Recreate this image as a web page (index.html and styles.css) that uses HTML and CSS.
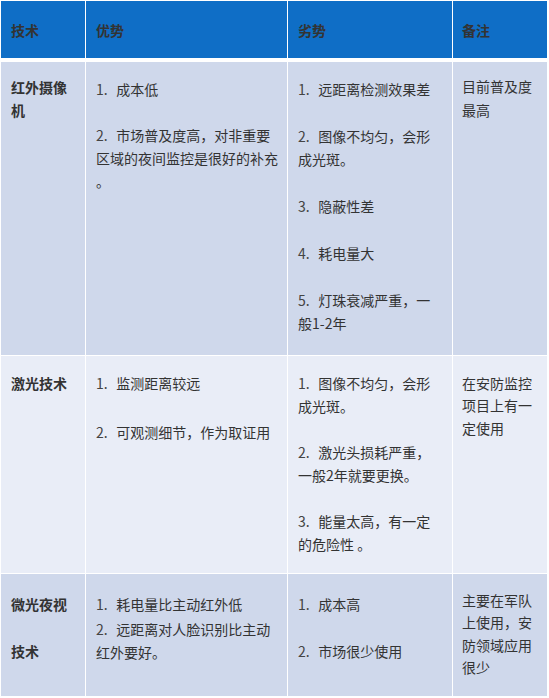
FILE: index.html
```html
<!DOCTYPE html>
<html lang="zh-CN">
<head>
<meta charset="utf-8">
<title>监控补光技术对比</title>
<link rel="stylesheet" href="styles.css">
</head>
<body>
<table class="grid">
  <colgroup>
    <col class="w1"><col class="w2"><col class="w3"><col class="w4">
  </colgroup>
  <thead>
    <tr>
      <th class="c1">技术</th>
      <th class="c2">优势</th>
      <th class="c3">劣势</th>
      <th class="c4">备注</th>
    </tr>
  </thead>
  <tbody>
    <tr class="dark first">
      <td class="c1 t14"><p class="p b">红外摄像机</p></td>
      <td class="c2">
        <p class="p"><span class="n">1.</span>成本低</p>
        <p class="p anyw"><span class="n">2.</span>市场普及度高，对非重要区域的夜间监控是很好的补充。</p>
      </td>
      <td class="c3 g24">
        <p class="p"><span class="n">1.</span>远距离检测效果差</p>
        <p class="p"><span class="n">2.</span>图像不均匀，会形成光斑。</p>
        <p class="p"><span class="n">3.</span>隐蔽性差</p>
        <p class="p"><span class="n">4.</span>耗电量大</p>
        <p class="p"><span class="n">5.</span>灯珠衰减严重，一般1-2年</p>
      </td>
      <td class="c4 t12 lh24"><p class="p">目前普及度最高</p></td>
    </tr>
    <tr class="light second">
      <td class="c1"><p class="p b">激光技术</p></td>
      <td class="c2 g26">
        <p class="p"><span class="n">1.</span>监测距离较远</p>
        <p class="p"><span class="n">2.</span>可观测细节，作为取证用</p>
      </td>
      <td class="c3">
        <p class="p"><span class="n">1.</span>图像不均匀，会形成光斑。</p>
        <p class="p"><span class="n">2.</span>激光头损耗严重，一般2年就要更换。</p>
        <p class="p"><span class="n">3.</span>能量太高，有一定的危险性 。</p>
      </td>
      <td class="c4 lh22"><p class="p">在安防监控项目上有一定使用</p></td>
    </tr>
    <tr class="dark last">
      <td class="c1 g24">
        <p class="p b">微光夜视</p>
        <p class="p b">技术</p>
      </td>
      <td class="c2 g2">
        <p class="p"><span class="n">1.</span>耗电量比主动红外低</p>
        <p class="p"><span class="n">2.</span>远距离对人脸识别比主动红外要好。</p>
      </td>
      <td class="c3 g24">
        <p class="p"><span class="n">1.</span>成本高</p>
        <p class="p"><span class="n">2.</span>市场很少使用</p>
      </td>
      <td class="c4 t15 lh22"><p class="p">主要在军队上使用，安防领域应用很少</p></td>
    </tr>
  </tbody>
</table>
</body>
</html>
```

FILE: styles.css
```css
html, body {
  margin: 0;
  padding: 0;
  background: #ffffff;
}

body {
  font-family: "Noto Sans CJK SC", "Noto Sans", sans-serif;
  font-size: 14px;
  color: #333333;
}

.grid {
  border-collapse: separate;
  border-spacing: 1px;
  table-layout: fixed;
  width: 548px;
  background: #ffffff;
}

.w1 { width: 84px; }
.w2 { width: 201px; }
.w3 { width: 164px; }
.w4 { width: 94px; }

.grid th {
  background: #0f6ec6;
  color: #333333;
  font-weight: bold;
  text-align: left;
  vertical-align: middle;
  height: 57px;
  padding-top: 0;
  padding-bottom: 0;
  border-bottom: 3px solid #ffffff;
  line-height: 20px;
}

.grid td {
  vertical-align: top;
  text-align: left;
  padding-top: 16px;
  padding-bottom: 18px;
}

.c1 { padding-left: 10px; padding-right: 10px; }
.c2 { padding-left: 10px; padding-right: 6px; }
.c3 { padding-left: 10px; padding-right: 10px; }
.c4 { padding-left: 9px; padding-right: 8px; }

.dark td { background: #cfd8eb; }
.light td { background: #e9edf7; }

.grid .first td { padding-bottom: 20px; }
.grid .second td { padding-bottom: 17px; }
.grid .last td { padding-top: 19px; }
.grid .last td.t15 { padding-top: 15px; }
.grid td.t12 { padding-top: 12px; }
.grid td.t14 { padding-top: 14px; }

.p {
  margin: 0;
  line-height: 23px;
}

.p + .p { margin-top: 23px; }
.g24 .p + .p { margin-top: 24px; }
.g26 .p + .p { margin-top: 26px; }
.g2 .p + .p { margin-top: 2px; }

.lh24 .p { line-height: 24px; }
.lh22 .p { line-height: 22.3px; }

.b { font-weight: bold; }

.anyw { line-break: anywhere; }

.n {
  margin-right: 8.5px;
  color: #444444;
}
```
